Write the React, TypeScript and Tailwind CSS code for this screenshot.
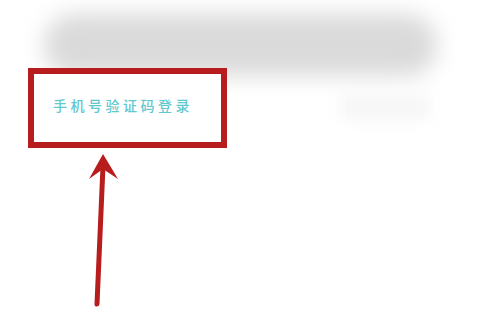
export default function App() {
  return (
    <div className="relative w-[481px] h-[327px] overflow-hidden bg-white">
      {/* blurred input bar behind the annotation */}
      <div className="pt-[14px] px-[44px]">
        <div className="h-[62px] rounded-[30px] bg-[#dadada] blur-[11px]" />
      </div>

      <div className="relative mt-[-8px] flex items-start">
        <div className="ml-[28px] w-[199px] h-[80px] border-[6px] border-[#b81d1d] bg-white flex items-start pt-[23px] pl-[19px]">
          <span
            className="text-[14px] leading-[16px] tracking-[3.5px] font-medium text-[#62c8d0] whitespace-nowrap"
            style={{ fontFamily: '"Noto Sans CJK SC", "Noto Sans", sans-serif' }}
          >
            手机号验证码登录
          </span>
        </div>
        <div className="ml-auto mr-[52px] mt-[26px] w-[88px] h-[26px] bg-[#f6f6f6] blur-[7px]" />
      </div>

      {/* annotation arrow */}
      <svg
        className="absolute left-0 top-0"
        width="481"
        height="327"
        viewBox="0 0 481 327"
      >
        <line
          x1="97"
          y1="304"
          x2="103"
          y2="166"
          stroke="#b81d1d"
          strokeWidth="5"
          strokeLinecap="round"
        />
        <path d="M103 154 L89 179 L103 169 L118 179 Z" fill="#b81d1d" />
      </svg>
    </div>
  );
}
